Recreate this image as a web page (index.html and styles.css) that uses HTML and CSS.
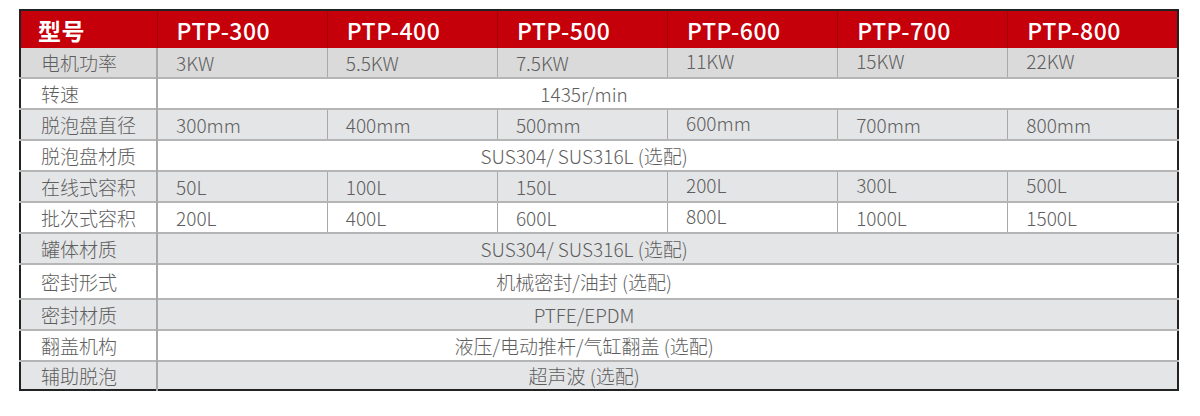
FILE: index.html
```html
<!DOCTYPE html>
<html lang="zh-CN">
<head>
<meta charset="utf-8">
<link rel="stylesheet" href="styles.css">
</head>
<body>
<table class="spec">
  <colgroup>
    <col class="c-label"><col class="c-val"><col class="c-val"><col class="c-val"><col class="c-val"><col class="c-val"><col class="c-val">
  </colgroup>
  <thead>
    <tr class="head">
      <th>型号</th><th>PTP-300</th><th>PTP-400</th><th>PTP-500</th><th>PTP-600</th><th>PTP-700</th><th>PTP-800</th>
    </tr>
  </thead>
  <tbody>
    <tr class="gray first">
      <td>电机功率</td><td>3KW</td><td>5.5KW</td><td>7.5KW</td><td class="up">11KW</td><td class="up">15KW</td><td class="up">22KW</td>
    </tr>
    <tr class="white">
      <td>转速</td><td colspan="6" class="merged">1435r/min</td>
    </tr>
    <tr class="gray">
      <td>脱泡盘直径</td><td>300mm</td><td>400mm</td><td>500mm</td><td class="up">600mm</td><td>700mm</td><td>800mm</td>
    </tr>
    <tr class="white">
      <td>脱泡盘材质</td><td colspan="6" class="merged">SUS304/ SUS316L (选配)</td>
    </tr>
    <tr class="gray">
      <td>在线式容积</td><td>50L</td><td>100L</td><td>150L</td><td class="up">200L</td><td class="up">300L</td><td class="up">500L</td>
    </tr>
    <tr class="white">
      <td>批次式容积</td><td>200L</td><td>400L</td><td>600L</td><td class="up">800L</td><td>1000L</td><td>1500L</td>
    </tr>
    <tr class="gray">
      <td>罐体材质</td><td colspan="6" class="merged">SUS304/ SUS316L (选配)</td>
    </tr>
    <tr class="white tall">
      <td>密封形式</td><td colspan="6" class="merged">机械密封/油封 (选配)</td>
    </tr>
    <tr class="gray">
      <td>密封材质</td><td colspan="6" class="merged">PTFE/EPDM</td>
    </tr>
    <tr class="white">
      <td>翻盖机构</td><td colspan="6" class="merged">液压/电动推杆/气缸翻盖 (选配)</td>
    </tr>
    <tr class="gray last">
      <td>辅助脱泡</td><td colspan="6" class="merged">超声波 (选配)</td>
    </tr>
  </tbody>
</table>
</body>
</html>
```

FILE: styles.css
```css
html, body {
  margin: 0;
  padding: 0;
  background: #ffffff;
}

body {
  padding: 9px 0 0 19px;
  font-family: "Noto Sans CJK SC", "Noto Sans", sans-serif;
}

.spec {
  border-collapse: collapse;
  table-layout: fixed;
  width: 1160px;
  border: 2px solid #222222;
}

.c-label { width: 137px; }
.c-val { width: 170px; }

.head {
  background: #c6000b;
  height: 38px;
}

.head th {
  color: #ffffff;
  font-size: 23px;
  font-weight: 500;
  text-align: left;
  padding: 0 0 0 19px;
  line-height: 36px;
  border-left: 1px solid #a0000a;
  letter-spacing: 0.5px;
}

.head th:first-child {
  padding-left: 17px;
  border-left: none;
  font-weight: 700;
}

tbody tr {
  height: 31px;
}

tbody tr.first { height: 30px; }
tbody tr.tall { height: 35px; }
tbody tr.last { height: 29px; }

.gray { background: #e4e5e7; }
.gray.first { background: #dadada; }
.white { background: #ffffff; }

tbody td {
  color: #5e5e5e;
  font-size: 19px;
  font-weight: 300;
  padding: 0 0 0 18px;
  line-height: 24px;
  border-top: 2px solid #b5b5b5;
  border-left: 1px solid #a9a9a9;
  white-space: nowrap;
}

tbody tr.first td {
  border-top: none;
}

tbody td:first-child {
  padding-left: 20px;
  border-left: none;
  border-right: 2px solid #a9a9a9;
}

tbody td.up {
  padding-bottom: 3px;
}

tbody td.merged {
  text-align: center;
  padding: 0 167px 0 0;
}
```
